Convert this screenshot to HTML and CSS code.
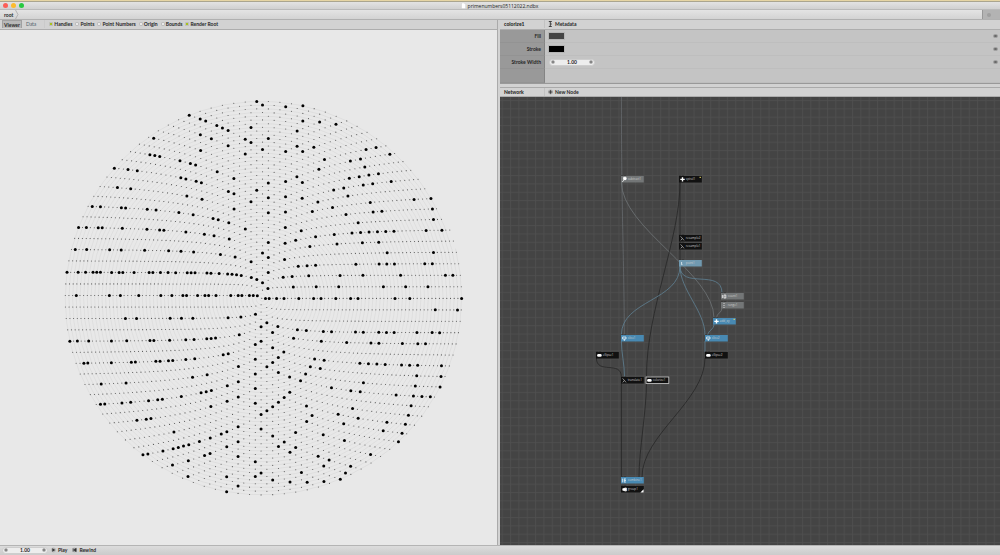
FILE: index.html
```html
<!DOCTYPE html>
<html lang="en">
<head>
<meta charset="utf-8">
<title>primenumbers05112022.ndbx</title>
<link rel="stylesheet" href="styles.css">
</head>
<body>
<div class="app">
  <header class="titlebar">
    <div class="lights">
      <button class="light red" aria-label="Close"></button>
      <button class="light amber" aria-label="Minimize"></button>
      <button class="light green" aria-label="Zoom"></button>
    </div>
    <div class="title">
      <svg class="doc" viewBox="0 0 5 6" aria-hidden="true"><path d="M.5 0H3.3L4.6 1.4V5.6H.5Z" fill="#fff" stroke="#bbb" stroke-width=".3"/></svg>
      <span>primenumbers05112022.ndbx</span>
    </div>
  </header>
  <nav class="path">
    <a href="#root">root</a>
    <svg class="chevron" viewBox="0 0 4 9" aria-hidden="true"><path d="M.5 0L3 4.5L.5 9" fill="none" stroke="#aaa" stroke-width=".8"/></svg>
    <div class="progress"><span></span></div>
  </nav>
  <main class="panes">
    <section class="left">
      <div class="bar tabs">
        <button class="tab active">Viewer</button>
        <button class="tab">Data</button>
        <div class="checks">
          <label><input type="checkbox" checked>Handles</label>
          <label><input type="checkbox">Points</label>
          <label><input type="checkbox">Point Numbers</label>
          <label><input type="checkbox">Origin</label>
          <label><input type="checkbox">Bounds</label>
          <label><input type="checkbox" checked>Render Root</label>
        </div>
      </div>
      <svg class="viewer" id="viewer" role="img" aria-label="Prime number spiral"></svg>
    </section>
    <section class="right">
      <div class="bar">
        <strong class="name">colorize1</strong>
        <button class="tool"><svg viewBox="0 0 5 6" aria-hidden="true"><path d="M.8 .5H3.8M2.3 .5V5.5M.8 5.5H3.8M2.3 3H3.8" stroke="#333" stroke-width=".9" fill="none"/></svg>Metadata</button>
      </div>
      <div class="params">
        <div class="row"><label for="fill">Fill</label><div class="value"><button id="fill" class="swatch grey"></button><button class="eye" aria-label="Fill options"></button></div></div>
        <div class="row"><label for="stroke">Stroke</label><div class="value"><button id="stroke" class="swatch black"></button><button class="eye" aria-label="Stroke options"></button></div></div>
        <div class="row"><label for="sw">Stroke Width</label><div class="value"><span class="stepper"><button aria-label="Less"></button><input id="sw" value="1.00"><button aria-label="More"></button></span><button class="eye" aria-label="Stroke width options"></button></div></div>
        <div class="row rest"><label></label><div class="value"></div></div>
      </div>
      <div class="bar network-bar">
        <strong class="name">Network</strong>
        <button class="tool"><svg viewBox="0 0 5 6" aria-hidden="true"><circle cx="2.5" cy="3" r="2.4" fill="#aaa"/><path d="M2.5 1.2V4.8M.7 3H4.3" stroke="#333" stroke-width=".8"/></svg>New Node</button>
      </div>
      <svg class="network" id="network" role="img" aria-label="Node network"></svg>
    </section>
  </main>
  <footer class="player">
    <span class="stepper"><button aria-label="Previous frame"></button><input aria-label="Frame" value="1.00"><button aria-label="Next frame"></button></span>
    <button class="tool"><svg viewBox="0 0 5 6" aria-hidden="true"><circle cx="2.5" cy="3" r="2.4" fill="#b5b5b5"/><path d="M1.3 1.2L4.3 3L1.3 4.8Z" fill="#333"/></svg>Play</button>
    <button class="tool"><svg viewBox="0 0 5 6" aria-hidden="true"><circle cx="2.5" cy="3" r="2.4" fill="#b5b5b5"/><path d="M1.1 1.2V4.8M1.4 3L4.2 1.2V4.8Z" fill="#333" stroke="#333" stroke-width=".5"/></svg>Rewind</button>
  </footer>
</div>
<script src="app.js"></script>
</body>
</html>
```

FILE: styles.css
```css
* { box-sizing: border-box; }
body { margin: 0; font: 700 5px/8px Lato, "Liberation Sans", sans-serif; color: #262626; }
button, input { font: inherit; color: inherit; margin: 0; padding: 0; border: 0; background: none; }
svg { display: block; }
.app { height: 100vh; display: flex; flex-direction: column; background: #d2d2d2; border-top: 1px solid #e6d5a4; overflow: hidden; }
.titlebar { height: 9px; flex: none; display: flex; align-items: center; border-top: 1px solid #aaa58f; border-bottom: 1px solid #bababa; background: linear-gradient(#e3e3e3, #d0d0d0); }
.lights { display: flex; gap: 3px; padding-left: 3px; flex: 1; }
.light { width: 5px; height: 5px; border-radius: 50%; }
.red { background: #fc5f57; }
.amber { background: #fdbb2d; }
.green { background: #28c940; }
.title { display: flex; align-items: center; gap: 2px; padding-right: 4px; font-family: "Open Sans", sans-serif; font-weight: 400; }
.titlebar::after { content: ""; flex: 1; }
.doc { width: 5px; height: 6px; }
.path { height: 10px; flex: none; display: flex; align-items: center; background: linear-gradient(#e4e4e4, #d3d3d3); border-bottom: 1px solid #b0b0b0; }
.path a { color: inherit; text-decoration: none; padding: 0 2px 0 4px; }
.chevron { width: 4px; height: 9px; }
.progress { margin-left: auto; width: 18px; height: 9px; background: #b3b3b3; border-left: 1px solid #989898; padding: 3px 4px; }
.progress span { display: block; width: 4px; height: 4px; border-radius: 50%; background: #9f9f9f; }
.panes { flex: 1; min-height: 0; display: grid; grid-template-columns: minmax(0, 1fr) minmax(0, 1fr); }
.left, .right { display: flex; flex-direction: column; min-width: 0; min-height: 0; }
.left { border-right: 1px solid #aaa; margin-right: 2px; }
.bar { height: 10px; flex: none; display: flex; align-items: center; background: #d2d2d2; border-bottom: 1px solid #adadad; padding-bottom: 1px; }
.tabs { padding-left: 2px; }
.tab { height: 8px; padding: 0 2px; font-weight: 400; color: #53656f; margin-right: 2px; }
.tab.active { background: #b8b8b8; border: 1px solid #a0a0a0; border-bottom: 0; padding: 0 1px; line-height: 6px; font-weight: 700; color: #262626; }
.checks { display: flex; gap: 3px; margin-left: 4px; padding-left: 4px; border-left: 1px solid #cacaca; }
.checks label { display: flex; align-items: center; gap: 1px; }
.checks input { appearance: none; width: 4px; height: 4px; background: #e9e9e9; border: 1px solid #bebebe; border-radius: 1px; }
.checks input:checked { background: #a9c41c; }
.viewer, .network { flex: 1; width: 100%; min-height: 0; }
.viewer { background: #e8e8e8; }
.network { background: #444; }
.name { width: 45px; padding-left: 4px; border-right: 1px solid #c2c2c2; }
.tool { display: flex; align-items: center; gap: 2px; font-weight: 700; padding-left: 3px; }
.tool svg { width: 5px; height: 6px; }
.params { flex: none; background: #c4c4c4; border-bottom: 1px solid #999; }
.row { display: grid; grid-template-columns: 45px 1fr; height: 13px; }
.row label { background: #999; border-right: 1px solid #848484; border-bottom: 1px solid #939393; text-align: right; padding: 2px 3px 0 0; white-space: nowrap; }
.value { display: flex; align-items: center; justify-content: space-between; padding: 0 2px 0 3px; border-bottom: 1px solid #bebebe; }
.row.rest { height: 14px; }
.swatch { width: 17px; height: 8px; border: 1px solid #b5b5b5; }
.grey { background: #444; }
.black { background: #000; }
.eye { width: 5px; height: 4px; border-radius: 50%; background: #666; border: 1px solid #a2a2a2; }
.stepper { display: flex; align-items: center; width: 46px; height: 7px; padding: 0 1px; border-radius: 4px; background: #ededed; border: 1px solid #cdcdcd; }
.value .stepper { margin-left: 1px; }
.stepper input { flex: 1; min-width: 0; width: 0; text-align: center; height: 5px; }
.stepper button { width: 4px; height: 4px; border-radius: 50%; background: #6f6f6f; border: 1px solid #b9b9b9; }
.network-bar { margin-top: 3px; border-top: 1px solid #aaa; padding-bottom: 0; }
.player { flex: none; height: 10px; display: flex; align-items: center; padding: 0 0 1px 2px; border-top: 1px solid #b4b4b4; background: linear-gradient(#dcdcdc, #cbcbcb); }
.player .tool + .tool { padding-left: 5px; }
.node-label { font: 400 3px/4px "Open Sans", sans-serif; fill: #ccc; }
```

FILE: app.js
```js
const NS = "http://www.w3.org/2000/svg";

function add(parent, name, attrs, text) {
  const el = document.createElementNS(NS, name);
  for (const key in attrs) el.setAttribute(key, attrs[key]);
  if (text) el.textContent = text;
  parent.appendChild(el);
  return el;
}

// Viewer: integers on an Archimedean spiral, primes as large dots.
function drawSpiral() {
  const root = document.getElementById("viewer");
  const g = add(root, "g", { transform: "translate(261.8 268.4)" });
  const pitch = 3.7, count = 2923;
  // Sieve with the first fourteen primes only.
  const divisors = [2, 3, 5, 7, 11, 13, 17, 19, 23, 29, 31, 37, 41, 43];
  // The spiral is slightly tighter on its lower and left sides.
  const at = t => {
    const x = pitch * t * Math.cos(2 * Math.PI * t), y = -pitch * t * Math.sin(2 * Math.PI * t);
    return [x < 0 ? x * 0.993 : x, y > 0 ? y * 0.988 : y];
  };
  let line = "M0 0";
  for (let t = 0.02; t < Math.sqrt(count - 1); t += 0.02) line += "L" + at(t).map(v => v.toFixed(2)).join(" ");
  add(g, "path", { d: line, fill: "none", stroke: "#d9d9d9", "stroke-width": 0.6 });
  for (let n = 1; n <= count; n++) {
    const [x, y] = at(Math.sqrt(n - 1));
    const prime = n > 1 && divisors.every(d => n === d || n % d);
    add(g, "circle", { cx: x.toFixed(2), cy: y.toFixed(2), r: prime ? 1.5 : 0.55, fill: prime ? "#000" : "#555" });
  }
}

// Network: grid, connections and nodes.
function drawNetwork() {
  const root = document.getElementById("network");
  const defs = add(root, "defs", {});
  const cell = add(defs, "pattern", { id: "grid", x: 1.7, y: 3, width: 8.34, height: 8.34, patternUnits: "userSpaceOnUse" });
  add(cell, "path", { d: "M.5 0V8.34M0 .5H8.34", stroke: "#4f4f4f", "stroke-width": 0.8 });
  add(root, "rect", { width: "100%", height: "100%", fill: "url(#grid)" });
  const g = add(root, "g", { transform: "translate(-500 -97)", fill: "none", "stroke-width": 0.8 });

  const grey = "#6e7376", blue = "#5f8194", dark = "#262626";
  const wires = [
    ["M621.4 90C621.4 220 624 250 624.3 335", "#676b6e"],
    ["M621.4 182C621.4 228 714 273 714 318", grey],
    ["M680 182V260", dark],
    ["M680 182C680 240 646.5 310 646.5 376", dark],
    ["M680 266C680 301 621.4 300 621.4 335", blue],
    ["M680 266C680 290 722 268 722 293", blue],
    ["M680 266C680 290 705 311 705 335", blue],
    ["M722 308C722 313 716.5 313 716.5 318", grey],
    ["M714 324C714 330 708 330 708 335", blue],
    ["M705 341V352", blue],
    ["M621.4 341C621.4 353 624.5 364 624.5 377", blue],
    ["M596.4 358C596.4 375 621.4 360 621.4 377", dark],
    ["M621.4 383V477", dark],
    ["M646.5 383C646.5 410 639 450 639 477", dark],
    ["M705 358C705 401 642 435 642 477", dark]
  ];
  wires.forEach(([d, stroke]) => add(g, "path", { d, stroke }));

  const icons = {
    ball: "M1.2 6L3 4M2.6 1.2H5V3.6H2.6Z",
    cross: "M3.5 1.2V5.6M1.3 3.4H5.7",
    sample: "M1.6 1.4L3.4 3.4L1.8 5.4M3.4 3.4L5 5.4",
    number: "M1.4 2V5M3 2V5H4.8V2Z",
    range: "M3 1V2M3 3V4M3 5V6",
    globe: "M1.6 2H5V4H1.6ZM3.3 4V6",
    pill: "M2.4 3.4H4.4",
    group: "M1.4 3.4H5.2M3.6 2H5.4V5H3.6Z",
    combine: "M1.4 1.6V5.4M3.2 1.6V5.4M3.2 2H5M3.2 3.5H5M3.2 5H5",
    slice: "M2.6 2V4.6H3.4"
  };
  const slate = "#737677", steel = "#4889b2", black = "#111";
  const nodes = [
    [621, 176, slate, "ball", "subtract1"],
    [679, 176, black, "cross", "spiral1", "port"],
    [679, 235, black, "sample", "resample2"],
    [679, 243, black, "sample", "resample1"],
    [679, 260, "#7099b0", "slice", "point1"],
    [721, 293, slate, "number", "count1"],
    [721, 302, slate, "range", "range1"],
    [713, 318, steel, "cross", "add_xy", "port"],
    [621, 335, steel, "globe", "slice1"],
    [705, 335, steel, "globe", "slice2"],
    [596, 352, black, "pill", "ellipse1"],
    [705, 352, black, "pill", "ellipse2"],
    [621, 377, black, "sample", "translate1"],
    [646, 377, black, "pill", "colorize1", "selected"],
    [621, 477, steel, "combine", "combine1"],
    [621, 486, black, "group", "group1", "rendered"]
  ];
  nodes.forEach(([x, y, fill, icon, label, flag]) => {
    const node = add(g, "g", { transform: `translate(${x} ${y})` });
    add(node, "path", { d: "M0 -.5H2.2M3 -.5H5", stroke: "#333", "stroke-width": 0.6 });
    const box = add(node, "rect", { width: 22.8, height: 6.5, fill });
    if (flag === "selected") { box.setAttribute("stroke", "#ccc"); box.setAttribute("stroke-width", 0.8); }
    const wide = icon === "pill" ? 2.6 : icon === "cross" ? 1.4 : 0.7;
    add(node, "path", { d: icons[icon], stroke: icon === "sample" ? "#bbb" : "#fff", "stroke-width": wide, "stroke-linecap": icon === "pill" ? "round" : "butt" });
    if (icon === "ball") add(node, "circle", { cx: 3.9, cy: 2.4, r: 1.5, fill: "#fff" });
    if (icon === "group") add(node, "rect", { x: 1.6, y: 2.2, width: 3.8, height: 2.6, fill: "#fff" });
    add(node, "text", { x: 6.8, y: 4.4, class: "node-label" }, label);
    if (flag === "port") add(node, "rect", { x: 20.6, y: 0.8, width: 1.2, height: 1.2, fill: "#e6d85c" });
    if (flag === "rendered") add(node, "path", { d: "M22.6 3.2V6.4H19.4Z", fill: "#fff" });
  });
}

drawSpiral();
drawNetwork();
```
